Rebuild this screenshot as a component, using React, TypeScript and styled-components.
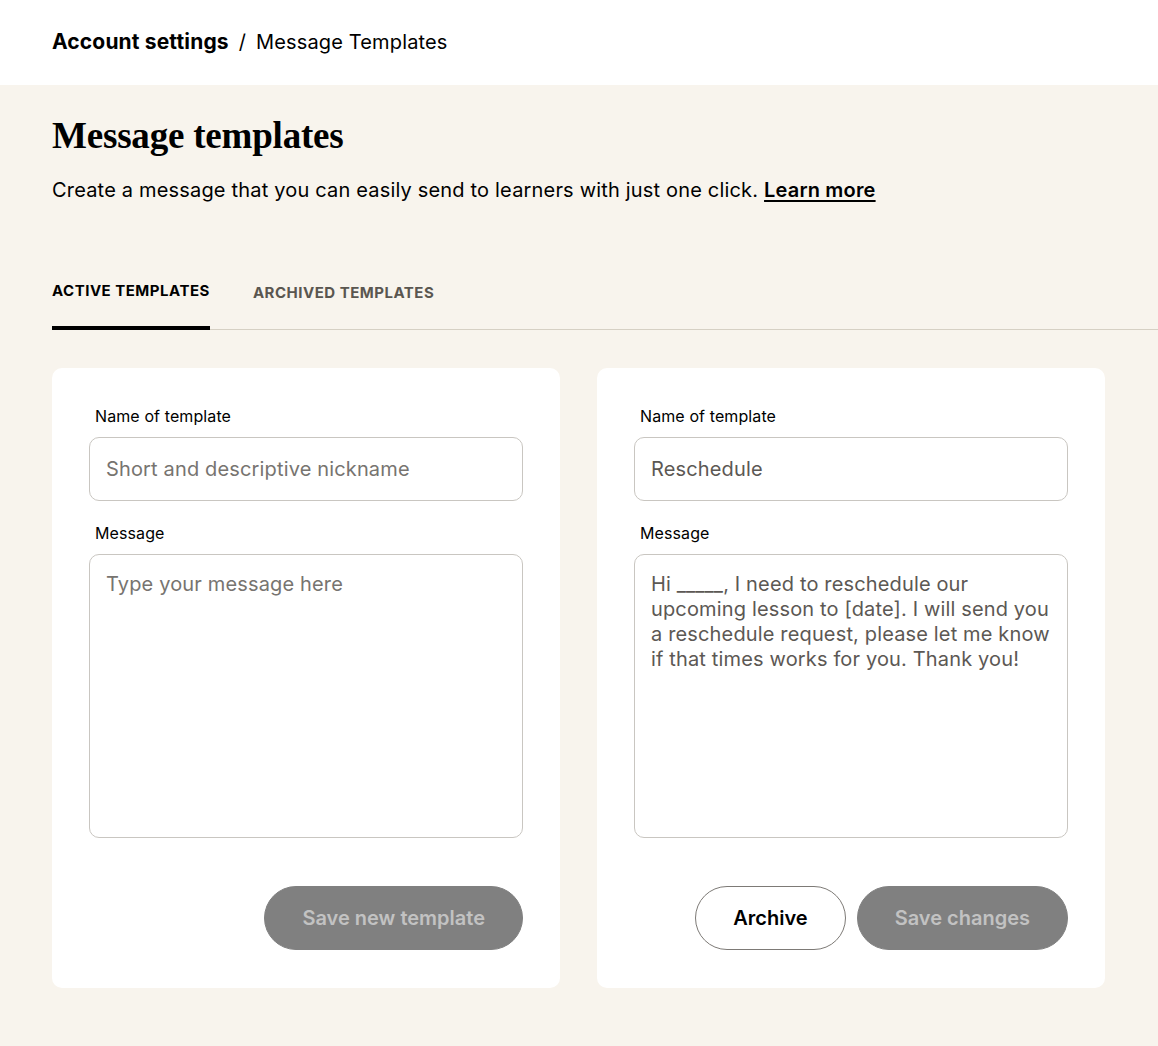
import { FC } from "react";
import styled, { createGlobalStyle } from "styled-components";

const GlobalStyle = createGlobalStyle`
  body {
    margin: 0;
    background: #f8f4ed;
    font-family: Inter, "Noto Sans", sans-serif;
    color: #000;
  }
  * { box-sizing: border-box; }
`;

const App: FC = () => {
  return (
    <>
      <GlobalStyle />
      <Header>
        <Crumb $strong>Account settings</Crumb>
        <Slash>/</Slash>
        <Crumb>Message Templates</Crumb>
      </Header>
      <Main>
        <Title>Message templates</Title>
        <Intro>
          Create a message that you can easily send to learners with just one click.{" "}
          <a href="#">Learn more</a>
        </Intro>
        <Tabs>
          <Tab $active>Active templates</Tab>
          <Tab>Archived templates</Tab>
        </Tabs>
        <Cards>
          <Card>
            <Field>
              <Label>Name of template</Label>
              <Input placeholder="Short and descriptive nickname" />
            </Field>
            <Field>
              <Label>Message</Label>
              <TextArea placeholder="Type your message here" />
            </Field>
            <Actions>
              <Button disabled>Save new template</Button>
            </Actions>
          </Card>
          <Card>
            <Field>
              <Label>Name of template</Label>
              <Input defaultValue="Reschedule" />
            </Field>
            <Field>
              <Label>Message</Label>
              <TextArea defaultValue="Hi _____, I need to reschedule our upcoming lesson to [date]. I will send you a reschedule request, please let me know if that times works for you. Thank you!" />
            </Field>
            <Actions>
              <Button $variant="outline">Archive</Button>
              <Button disabled>Save changes</Button>
            </Actions>
          </Card>
        </Cards>
      </Main>
    </>
  );
};
export default App;

const Header = styled.header`
  height: 85px;
  background: #fff;
  display: flex;
  align-items: center;
  padding: 0 52px 2px;
  font-size: 20px;
`;
const Crumb = styled.span<{ $strong?: boolean }>`
  font-size: ${(p) => (p.$strong ? "21px" : "20px")};
  font-weight: ${(p) => (p.$strong ? 700 : 400)};
  letter-spacing: 0.15px;
`;
const Slash = styled.span`
  margin: 0 10px;
`;
const Main = styled.main`
  padding: 29px 0 58px 52px;
`;
const Title = styled.h1`
  margin: 0;
  font-family: "Liberation Serif", "DejaVu Serif", serif;
  font-weight: 700;
  font-size: 37px;
  line-height: 44px;
  letter-spacing: -0.2px;
`;
const Intro = styled.p`
  margin: 18px 0 0;
  font-size: 20px;
  line-height: 28px;
  letter-spacing: 0.18px;
  a {
    color: #000;
    font-weight: 600;
    text-decoration: underline;
    text-decoration-thickness: 2px;
    text-underline-offset: 3px;
  }
`;
const Tabs = styled.div`
  display: flex;
  gap: 43px;
  margin-top: 77px;
  border-bottom: 1px solid #d6d0c4;
`;
const Tab = styled.div<{ $active?: boolean }>`
  font-size: 15px;
  font-weight: 700;
  text-transform: uppercase;
  letter-spacing: 0.5px;
  color: ${(p) => (p.$active ? "#000" : "#5a5650")};
  padding: ${(p) => (p.$active ? "0 0 26px" : "2px 0 24px")};
  border-bottom: 4px solid ${(p) => (p.$active ? "#000" : "transparent")};
  margin-bottom: -1px;
`;
const Cards = styled.div`
  display: grid;
  grid-template-columns: 508px 508px;
  gap: 37px;
  margin-top: 38px;
`;
const Card = styled.section`
  background: #fff;
  border-radius: 10px;
  padding: 38px 37px 38px;
  display: flex;
  flex-direction: column;
`;
const Field = styled.label`
  display: flex;
  flex-direction: column;
  margin-bottom: 22px;
`;
const Label = styled.span`
  font-size: 16px;
  line-height: 20px;
  padding-left: 6px;
  margin-bottom: 11px;
  letter-spacing: 0.1px;
`;
const inputBase = `
  font-family: Inter, "Noto Sans", sans-serif;
  font-size: 20px;
  letter-spacing: 0.15px;
  color: #5c5854;
  border: 1px solid #c9c6c1;
  border-radius: 10px;
  background: #fff;
  padding: 0 16px;
  outline: none;
  &::placeholder { color: #777470; }
`;
const Input = styled.input`
  ${inputBase}
  height: 64px;
`;
const TextArea = styled.textarea`
  ${inputBase}
  height: 284px;
  padding-top: 17px;
  line-height: 25px;
  resize: none;
`;
const Actions = styled.div`
  display: flex;
  justify-content: flex-end;
  gap: 11px;
  margin-top: 26px;
`;
const Button = styled.button<{ $variant?: "outline" }>`
  height: 64px;
  border-radius: 32px;
  font-family: Inter, "Noto Sans", sans-serif;
  font-size: 20px;
  font-weight: 600;
  padding: 0 37px;
  cursor: pointer;
  border: 1px solid ${(p) => (p.$variant === "outline" ? "#7d7a76" : "#808080")};
  background: ${(p) => (p.$variant === "outline" ? "#fff" : "#808080")};
  color: ${(p) => (p.$variant === "outline" ? "#000" : "#c2c2c2")};
  &:disabled { cursor: default; }
`;
